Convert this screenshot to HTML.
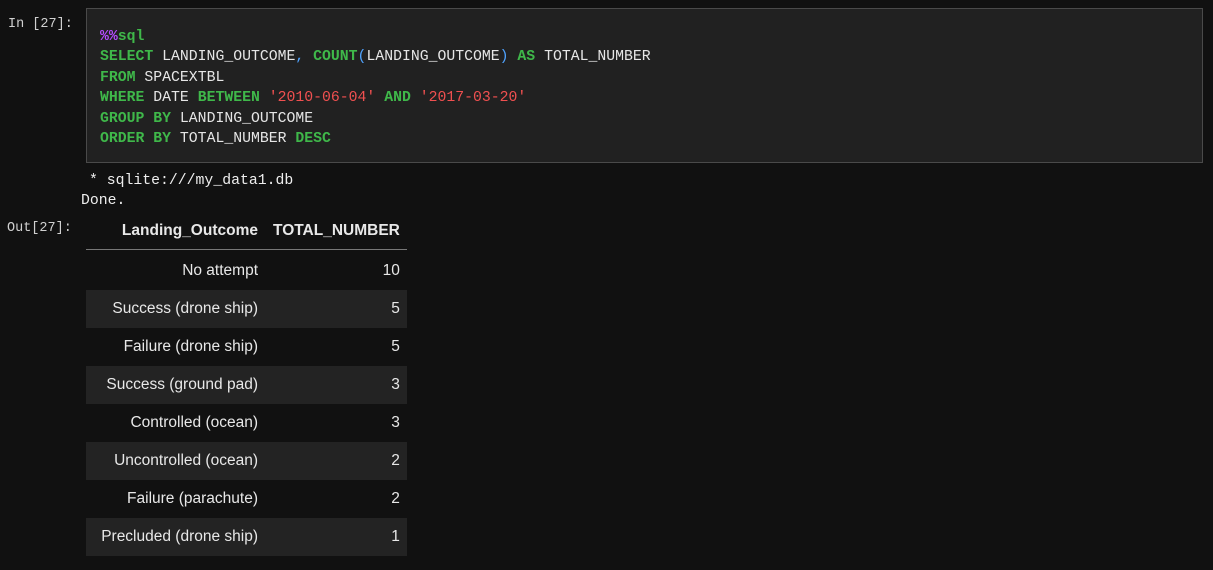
<!DOCTYPE html>
<html><head><style>
body{margin:0;background:#111111;width:1213px;height:570px;overflow:hidden;position:relative;font-family:"Liberation Mono",monospace;color:#e0e0e0}
.p{position:absolute;font-size:13.5px;color:#d0d0d0;line-height:16px;white-space:pre}
.cell{position:absolute;left:86px;top:8px;width:1115px;height:153px;background:#212121;border:1px solid #4a4a4a}
pre{margin:0;position:absolute;left:13px;top:18px;font-family:"Liberation Mono",monospace;font-size:14.8px;line-height:20.4px;color:#e6e6e6}
.k{color:#3fb84a;font-weight:bold}.m{color:#b44cff;font-weight:bold}.s{color:#f05050}.b{color:#4fa3ff}
table{position:absolute;left:86px;top:213px;border-collapse:collapse;font-family:"Liberation Sans",sans-serif;font-size:15.5px;color:#e8e8e8;white-space:nowrap}
th{font-weight:bold;text-align:right;height:36px;padding:0 7px 0 8px;border-bottom:1px solid #777}
td{text-align:right;height:38px;padding:0 7px 0 8px}
tr.o td{background:#232323}
</style></head><body>
<div class="p" style="left:8px;top:17px">In [27]:</div>
<div class="cell"><pre><span class="m">%%</span><span class="k">sql</span>
<span class="k">SELECT</span> LANDING_OUTCOME<span class="b">,</span> <span class="k">COUNT</span><span class="b">(</span>LANDING_OUTCOME<span class="b">)</span> <span class="k">AS</span> TOTAL_NUMBER
<span class="k">FROM</span> SPACEXTBL
<span class="k">WHERE</span> DATE <span class="k">BETWEEN</span> <span class="s">'2010-06-04'</span> <span class="k">AND</span> <span class="s">'2017-03-20'</span>
<span class="k">GROUP BY</span> LANDING_OUTCOME
<span class="k">ORDER BY</span> TOTAL_NUMBER <span class="k">DESC</span></pre></div>
<div class="p" style="left:89px;top:173px;color:#eee;font-size:14.8px">* sqlite:///my_data1.db</div>
<div class="p" style="left:81px;top:193px;color:#eee;font-size:14.8px">Done.</div>
<div class="p" style="left:7px;top:221px">Out[27]:</div>
<table>
<tr><th style="width:164px">Landing_Outcome</th><th style="width:123px">TOTAL_NUMBER</th></tr>
<tr><td style="height:38px;padding-top:2px">No attempt</td><td style="height:38px;padding-top:2px">10</td></tr>
<tr class="o"><td>Success (drone ship)</td><td>5</td></tr>
<tr><td>Failure (drone ship)</td><td>5</td></tr>
<tr class="o"><td>Success (ground pad)</td><td>3</td></tr>
<tr><td>Controlled (ocean)</td><td>3</td></tr>
<tr class="o"><td>Uncontrolled (ocean)</td><td>2</td></tr>
<tr><td>Failure (parachute)</td><td>2</td></tr>
<tr class="o"><td>Precluded (drone ship)</td><td>1</td></tr>
</table>
</body></html>
